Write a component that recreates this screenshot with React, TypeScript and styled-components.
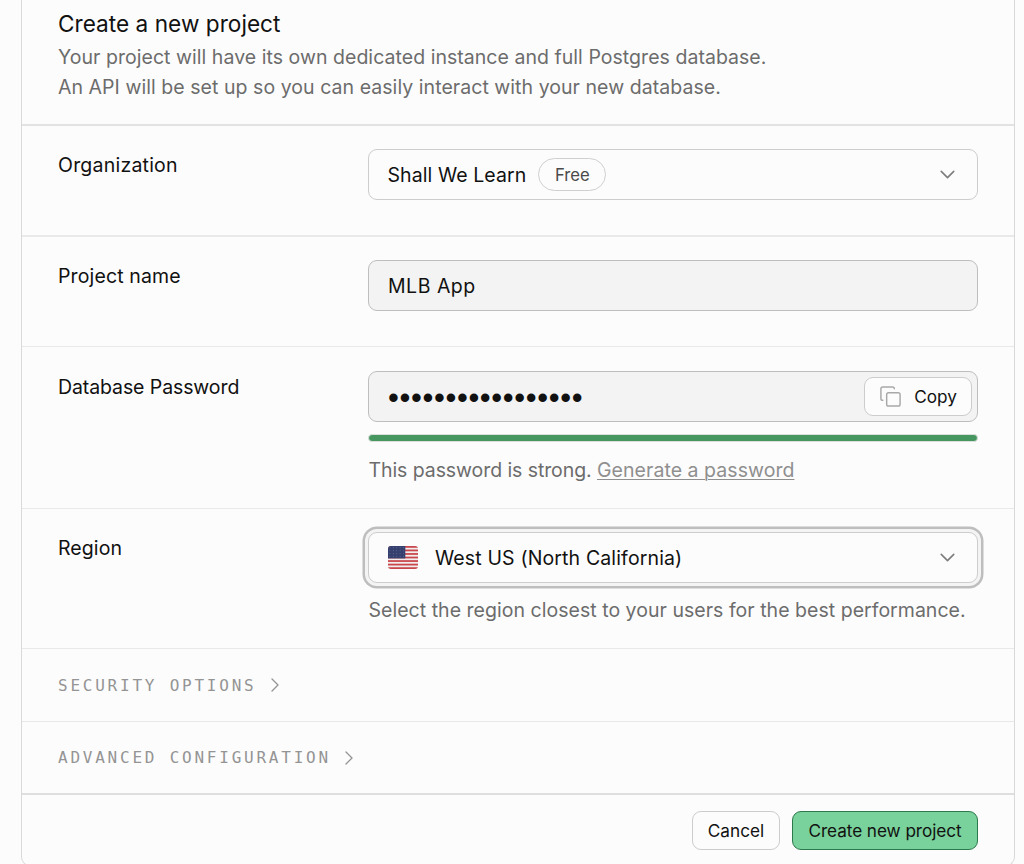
import React from 'react';
import styled, { createGlobalStyle } from 'styled-components';
import { ChevronDown, ChevronRight, Copy } from 'lucide-react';

const GlobalStyle = createGlobalStyle`
  *, *::before, *::after { box-sizing: border-box; }
  html, body { margin: 0; background: #fcfcfc; }
  body { height: 864px; overflow: hidden; font-family: Inter, "Liberation Sans", sans-serif; font-weight: 400; color: #111; }
  button, input { font-family: inherit; font-weight: inherit; margin: 0; }
`;

const Panel = styled.main`
  width: 994px;
  height: 866px;
  margin-left: 21px;
  border: solid #d9d9d9;
  border-width: 0 1px 1px;
  border-radius: 0 0 9px 9px;
  display: flex;
  flex-direction: column;
`;

const Header = styled.header`
  height: 126px;
  padding: 6px 36px 0;
  border-bottom: 2px solid #e2e2e2;
`;

const Title = styled.h1`
  margin: 0;
  font-size: 22.6px;
  line-height: 36px;
  font-weight: 400;
  letter-spacing: 0.03px;
`;

const Line = styled.p<{ $spacing?: number }>`
  margin: 0;
  font-size: 19.5px;
  line-height: 30px;
  letter-spacing: ${p => p.$spacing ?? 0}px;
  color: #6c6c6c;
  white-space: nowrap;
`;

const Row = styled.section<{ $height: number; $line?: number; $top?: number }>`
  display: grid;
  grid-template-columns: 310px 610px;
  align-items: start;
  height: ${p => p.$height}px;
  padding: ${p => p.$top ?? 23}px 0 0 36px;
  border-bottom: ${p => p.$line ?? 1}px solid #e9e9e9;
`;

const Label = styled.label<{ $spacing?: number }>`
  padding-top: 1px;
  font-size: 19.5px;
  line-height: 30px;
  letter-spacing: ${p => p.$spacing ?? 0}px;
`;

const Field = styled.div`
  min-width: 0;
`;

const Select = styled.button<{ $focused?: boolean }>`
  display: flex;
  align-items: center;
  width: 610px;
  height: 51px;
  padding: 0 17px 0 18.5px;
  font-size: 19.5px;
  color: #111;
  background: #fcfcfc;
  border: 1px solid #cdcdcd;
  border-radius: 9px;
  box-shadow: ${p => (p.$focused ? '0 0 0 3px #f4f4f4, 0 0 0 5.5px #bebebe' : 'none')};
`;

const Value = styled.span<{ $spacing?: number }>`
  letter-spacing: ${p => p.$spacing ?? 0}px;
  white-space: nowrap;
`;

const Badge = styled.span`
  display: flex;
  align-items: center;
  justify-content: center;
  width: 68px;
  height: 33px;
  margin-left: 12px;
  padding-top: 1px;
  font-size: 16.7px;
  color: #4a4a4a;
  border: 1px solid #cfcfcf;
  border-radius: 17px;
`;

const Caret = styled(ChevronDown)`
  margin-left: auto;
  color: #7c7c7c;
`;

const InputBox = styled.div`
  display: flex;
  align-items: center;
  justify-content: space-between;
  width: 610px;
  height: 51px;
  padding: 0 5px 0 19px;
  font-size: 19.5px;
  background: #f3f3f3;
  border: 1px solid #bebebe;
  border-radius: 9px;
`;

const Dots = styled.span`
  padding-top: 2px;
  font-family: "Liberation Sans", sans-serif;
  font-size: 31px;
  line-height: 40px;
  letter-spacing: 0.63px;
`;

const Button = styled.button<{ $kind?: 'primary'; $width: number }>`
  display: flex;
  align-items: center;
  justify-content: center;
  gap: 12px;
  width: ${p => p.$width}px;
  height: 39px;
  padding: 0;
  font-size: 17.2px;
  letter-spacing: ${p => (p.$kind ? '-0.06px' : '0')};
  color: #111;
  white-space: nowrap;
  background: ${p => (p.$kind ? '#79d19b' : '#fcfcfc')};
  border: 1px solid ${p => (p.$kind ? '#2c7a4b' : '#cccccc')};
  border-radius: 9px;
`;

const Strength = styled.div`
  height: 8px;
  margin-top: 12px;
  background: #45975f;
  border: 1px solid #dcdfdc;
  border-radius: 4px;
`;

const Help = styled(Line)<{ $top: number }>`
  margin-top: ${p => p.$top}px;
  padding-left: 0.5px;
`;

const Link = styled.a`
  color: #8f8f8f;
  letter-spacing: 0.05px;
  text-decoration: underline;
  text-decoration-thickness: 1px;
  text-underline-offset: 2px;
`;

const Flag = styled.svg`
  flex: none;
  margin-right: 17.5px;
`;

const Disclosure = styled.button<{ $height: number; $strong?: boolean }>`
  display: flex;
  align-items: center;
  gap: 6.5px;
  height: ${p => p.$height}px;
  padding: 0 36px;
  font-family: "DejaVu Sans Mono", monospace;
  font-size: 16px;
  letter-spacing: 2.77px;
  text-transform: uppercase;
  color: #949494;
  background: none;
  border: 0;
  border-bottom: ${p => (p.$strong ? '2px solid #dedede' : '1px solid #e8e8e8')};
`;

const Footer = styled.footer`
  display: flex;
  justify-content: flex-end;
  gap: 12px;
  padding: 16px 36px 0 0;
`;

const UsFlag = () => (
  <Flag width="30" height="23" viewBox="0 0 30 23" aria-label="United States">
    <clipPath id="flag-shape"><rect width="30" height="23" rx="3" /></clipPath>
    <g clipPath="url(#flag-shape)">
      <rect width="30" height="23" fill="#f2eeee" />
      {Array.from({ length: 7 }, (_, i) => (
        <rect key={i} y={i * 3.54} width="30" height="1.77" fill="#c9474c" />
      ))}
      <rect width="17.3" height="12.4" fill="#35406f" />
      {Array.from({ length: 20 }, (_, i) => (
        <circle key={i} cx={1.9 + (i % 5) * 3.4} cy={1.8 + Math.floor(i / 5) * 3} r="0.45" fill="#7d86ab" />
      ))}
    </g>
  </Flag>
);

export default function App() {
  return (
    <>
      <GlobalStyle />
      <Panel>
        <Header>
          <Title>Create a new project</Title>
          <Line $spacing={0.04}>Your project will have its own dedicated instance and full Postgres database.</Line>
          <Line $spacing={0.05}>An API will be set up so you can easily interact with your new database.</Line>
        </Header>

        <Row $height={111} $line={2}>
          <Label $spacing={0.22}>Organization</Label>
          <Field>
            <Select>
              <Value $spacing={0.08}>Shall We Learn</Value>
              <Badge>Free</Badge>
              <Caret size={25} strokeWidth={1.5} />
            </Select>
          </Field>
        </Row>

        <Row $height={110}>
          <Label $spacing={0.13}>Project name</Label>
          <Field>
            <InputBox><Value $spacing={0.5}>MLB App</Value></InputBox>
          </Field>
        </Row>

        <Row $height={162} $top={24}>
          <Label $spacing={-0.1}>Database Password</Label>
          <Field>
            <InputBox>
              <Dots>•••••••••••••••••</Dots>
              <Button $width={108}>
                <Copy size={23} strokeWidth={1.5} color="#a8a8a8" />
                Copy
              </Button>
            </InputBox>
            <Strength />
            <Help $top={13} $spacing={-0.08}>
              This password is strong. <Link>Generate a password</Link>
            </Help>
          </Field>
        </Row>

        <Row $height={140}>
          <Label $spacing={0.08}>Region</Label>
          <Field>
            <Select $focused>
              <UsFlag />
              <Value $spacing={0.14}>West US (North California)</Value>
              <Caret size={25} strokeWidth={1.5} />
            </Select>
            <Help $top={12} $spacing={0.03}>Select the region closest to your users for the best performance.</Help>
          </Field>
        </Row>

        <Disclosure $height={73}>
          Security options
          <ChevronRight size={24} strokeWidth={1.3} />
        </Disclosure>
        <Disclosure $height={73} $strong>
          Advanced configuration
          <ChevronRight size={24} strokeWidth={1.3} />
        </Disclosure>

        <Footer>
          <Button $width={88}>Cancel</Button>
          <Button $kind="primary" $width={186}>Create new project</Button>
        </Footer>
      </Panel>
    </>
  );
}
